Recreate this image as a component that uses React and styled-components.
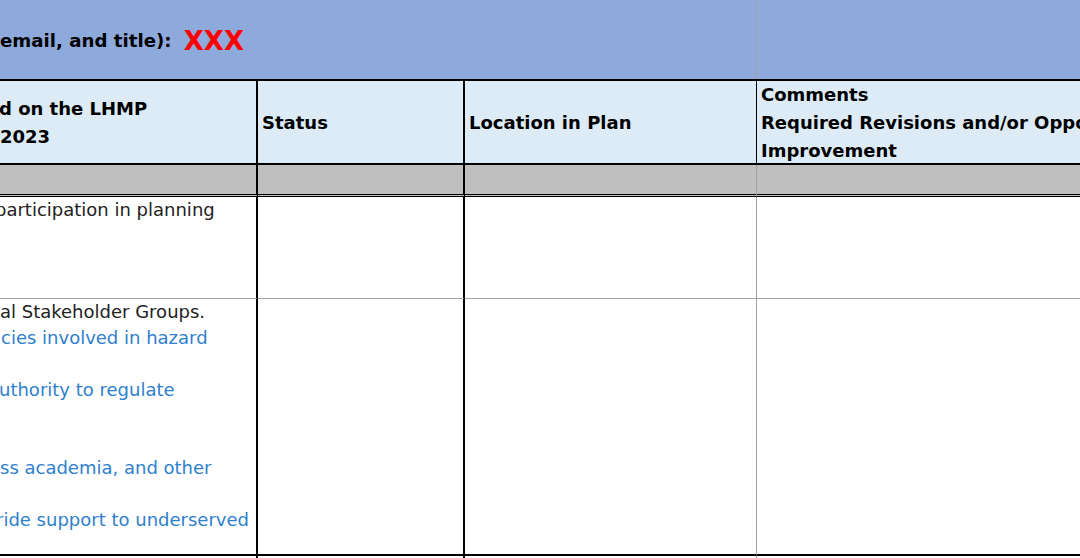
import React from 'react';
import styled, { createGlobalStyle } from 'styled-components';

const GlobalStyle = createGlobalStyle`
  html, body {
    margin: 0;
    padding: 0;
    background: #ffffff;
  }
  body {
    width: 1080px;
    height: 558px;
    overflow: hidden;
    font-family: "DejaVu Sans", "Liberation Sans", sans-serif;
  }
`;

const borders = {
  thick: '2px solid #000000',
  thin: '1px solid #000000',
  grid: '1px solid #a3a3a3',
  double: '3px double #000000',
};

const Sheet = styled.div`
  width: 1080px;
  height: 558px;
  overflow: hidden;
  display: grid;
  grid-template-columns: 258px 207px 292px 1fr;
  grid-template-rows: 79px 86px 32px 102px 257px 1fr;
`;

const Cell = styled.div`
  box-sizing: border-box;
  min-width: 0;
  overflow: hidden;
  background: ${(p) => p.$bg || '#ffffff'};
  grid-column: ${(p) => p.$span || 'auto'};
  border-top: ${(p) => borders[p.$top] || 'none'};
  border-right: ${(p) => borders[p.$right] || 'none'};
  border-bottom: ${(p) => borders[p.$bottom] || 'none'};
`;

const BannerCell = styled(Cell)`
  display: flex;
  align-items: center;
  padding-top: 2px;
`;

const BannerTitle = styled.span`
  font-size: 18.2px;
  font-weight: bold;
  color: #000000;
  white-space: nowrap;
`;

const Placeholder = styled.span`
  font-size: 26px;
  font-weight: bold;
  color: #ff0000;
  margin-left: 12px;
  letter-spacing: 0.2px;
`;

const HeadCell = styled(Cell)`
  display: flex;
  flex-direction: column;
  justify-content: center;
  padding-top: 2px;
  padding-left: ${(p) => (p.$flush ? '0' : '4px')};
`;

const HeadLine = styled.div`
  font-size: 18px;
  font-weight: bold;
  line-height: 28px;
  color: #000000;
  white-space: nowrap;
  margin-left: ${(p) => p.$shift || 0}px;
`;

const BodyCell = styled(Cell)`
  display: flex;
  flex-direction: column;
`;

const BodyLine = styled.div`
  font-size: 18px;
  line-height: 26px;
  height: 26px;
  white-space: nowrap;
  color: ${(p) => (p.$tone === 'link' ? '#2f80cd' : '#222222')};
  margin-left: ${(p) => p.$shift || 0}px;
`;

const requirementLines = [
  { text: 'al Stakeholder Groups.', shift: 0 },
  { text: 'cies involved in hazard', tone: 'link', shift: 1 },
  { text: '' },
  { text: 'uthority to regulate', tone: 'link', shift: -1 },
  { text: '' },
  { text: '' },
  { text: 'ss academia, and other', tone: 'link', shift: 0 },
  { text: '' },
  { text: 'ride support to underserved', tone: 'link', shift: -4 },
];

export default function App() {
  return (
    <>
      <GlobalStyle />
      <Sheet>
        <BannerCell $span="1 / span 3" $bg="#8ea9db" $right="grid">
          <BannerTitle>email, and title):</BannerTitle>
          <Placeholder>XXX</Placeholder>
        </BannerCell>
        <Cell $bg="#8ea9db" />

        <HeadCell $bg="#ddebf7" $top="thick" $bottom="thick" $right="thick" $flush>
          <HeadLine $shift={-1}>d on the LHMP</HeadLine>
          <HeadLine>2023</HeadLine>
        </HeadCell>
        <HeadCell $bg="#ddebf7" $top="thick" $bottom="thick" $right="thick">
          <HeadLine>Status</HeadLine>
        </HeadCell>
        <HeadCell $bg="#ddebf7" $top="thick" $bottom="thick" $right="thin">
          <HeadLine>Location in Plan</HeadLine>
        </HeadCell>
        <HeadCell $bg="#ddebf7" $top="thick" $bottom="thick">
          <HeadLine>Comments</HeadLine>
          <HeadLine>Required Revisions and/or Opportunities for</HeadLine>
          <HeadLine>Improvement</HeadLine>
        </HeadCell>

        <Cell $bg="#bfbfbf" $right="thick" $bottom="double" />
        <Cell $bg="#bfbfbf" $right="thick" $bottom="double" />
        <Cell $bg="#bfbfbf" $right="grid" $bottom="double" />
        <Cell $bg="#bfbfbf" $bottom="double" />

        <BodyCell $right="thick" $bottom="grid">
          <BodyLine $shift={-5}>participation in planning</BodyLine>
        </BodyCell>
        <Cell $right="thick" $bottom="grid" />
        <Cell $right="grid" $bottom="grid" />
        <Cell $bottom="grid" />

        <BodyCell $right="thick" $bottom="thick">
          {requirementLines.map((line, i) => (
            <BodyLine key={i} $tone={line.tone} $shift={line.shift}>
              {line.text}
            </BodyLine>
          ))}
        </BodyCell>
        <Cell $right="thick" $bottom="thick" />
        <Cell $right="grid" $bottom="thick" />
        <Cell $bottom="thick" />

        <Cell $right="thick" />
        <Cell $right="thick" />
        <Cell $right="grid" />
        <Cell />
      </Sheet>
    </>
  );
}
